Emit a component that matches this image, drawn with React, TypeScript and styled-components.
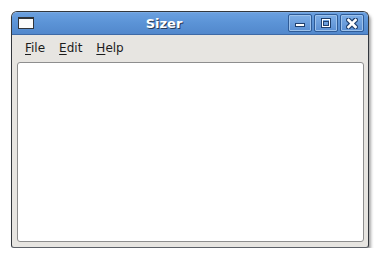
import styled, {createGlobalStyle} from 'styled-components';

const GlobalStyle = createGlobalStyle`
  html, body {
    margin: 0;
    background: #ffffff;
  }
`;

const Page = styled.div`
  padding: 11px 0 0 11px;
  font-family: 'DejaVu Sans', 'Liberation Sans', sans-serif;
`;

const Window = styled.div`
  display: flex;
  flex-direction: column;
  width: 356px;
  height: 235px;
  border: 1px solid #33373d;
  border-bottom-color: #5c6068;
  border-radius: 6px 6px 3px 3px;
  background: #e7e5e1;
  box-shadow: 2px 3px 3px rgba(60, 60, 60, 0.45);
  overflow: hidden;
`;

const TitleBar = styled.div`
  display: flex;
  align-items: center;
  height: 22px;
  padding: 0 4px 0 6px;
  background: linear-gradient(#8ab6e8 0, #6a9fdf 1px, #5b93d6 50%, #5288cc 100%);
  border-bottom: 1px solid #3e6aa6;
`;

const WindowIcon = styled.div`
  width: 14px;
  height: 9px;
  background: #fbfbfb;
  border: 1px solid #30343a;
  border-top-width: 2px;
`;

const Title = styled.div`
  flex: 1;
  text-align: center;
  padding-left: 6px;
  color: #ffffff;
  font-size: 13px;
  font-weight: bold;
  text-shadow: 1px 1px 0 #2a3b55;
`;

const Buttons = styled.div`
  display: flex;
  gap: 2px;
`;

const TitleButton = styled.div`
  display: flex;
  align-items: center;
  justify-content: center;
  width: 22px;
  height: 16px;
  border: 1px solid #2f5b96;
  border-radius: 2px;
  background: linear-gradient(#7eaee6, #5a8fd3);
  box-shadow: inset 0 0 0 1px #9dc2ec;
`;

const MenuBar = styled.div`
  display: flex;
  align-items: center;
  height: 26px;
  padding: 0 0 0 8px;
`;

const MenuItem = styled.div`
  padding: 0 5px;
  margin-right: 4px;
  font-size: 12px;
  color: #1c1c1c;

  u {
    text-decoration: underline;
    text-underline-offset: 2px;
  }
`;

const Frame = styled.div`
  flex: 1;
  margin: 1px 4px 5px 5px;
  background: #ffffff;
  border: 1px solid #8e8e8e;
  border-radius: 3px;
`;

const Glyph = styled.svg`
  display: block;
`;

export default function App() {
  return (
    <Page>
      <GlobalStyle />
      <Window>
        <TitleBar>
          <WindowIcon />
          <Title>Sizer</Title>
          <Buttons>
            <TitleButton>
              <Glyph width="12" height="10" viewBox="0 0 12 10">
                <rect x="1.5" y="5.5" width="9" height="3" fill="#ffffff" stroke="#1f3f6c" strokeWidth="1" />
              </Glyph>
            </TitleButton>
            <TitleButton>
              <Glyph width="12" height="10" viewBox="0 0 12 10">
                <rect x="1.5" y="0.5" width="9" height="9" fill="none" stroke="#1f3f6c" strokeWidth="1" />
                <rect x="2.5" y="1.5" width="7" height="7" fill="none" stroke="#ffffff" strokeWidth="1" />
                <rect x="3.5" y="3.5" width="5" height="4" fill="none" stroke="#1f3f6c" strokeWidth="1" />
              </Glyph>
            </TitleButton>
            <TitleButton>
              <Glyph width="12" height="11" viewBox="0 0 12 11">
                <path d="M2.5 2 L9.5 9 M9.5 2 L2.5 9" stroke="#1f3f6c" strokeWidth="5" strokeLinecap="square" />
                <path d="M2.5 2 L9.5 9 M9.5 2 L2.5 9" stroke="#ffffff" strokeWidth="2.6" strokeLinecap="square" />
              </Glyph>
            </TitleButton>
          </Buttons>
        </TitleBar>
        <MenuBar>
          <MenuItem><u>F</u>ile</MenuItem>
          <MenuItem><u>E</u>dit</MenuItem>
          <MenuItem><u>H</u>elp</MenuItem>
        </MenuBar>
        <Frame />
      </Window>
    </Page>
  );
}
